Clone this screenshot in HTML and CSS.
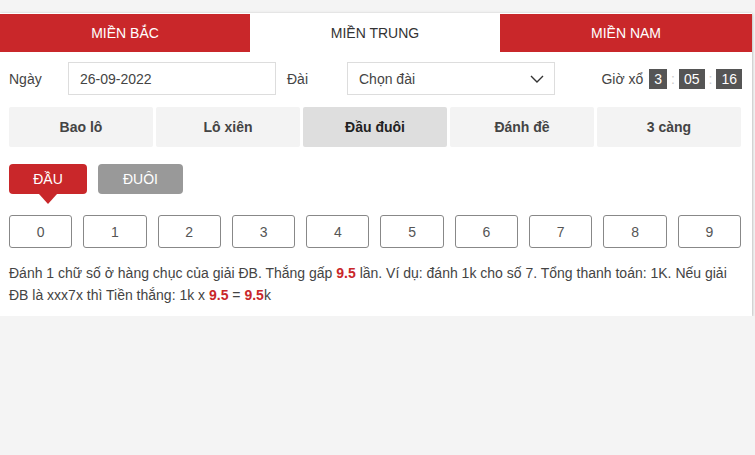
FILE: index.html
```html
<!DOCTYPE html>
<html lang="vi">
  <head>
    <meta charset="UTF-8" />
    <meta name="viewport" content="width=device-width, initial-scale=1" />
    <title>Đầu đuôi - Miền Trung</title>
    <link rel="stylesheet" href="styles.css">
  </head>
  <body>
    <div class="card">
      <div class="region-tabs">
        <div class="region red">MIỀN BẮC</div>
        <div class="region active">MIỀN TRUNG</div>
        <div class="region red wide">MIỀN NAM</div>
      </div>

      <div class="filter-row">
        <span class="label">Ngày</span>
        <div class="field">26-09-2022</div>
        <span class="label label-dai">Đài</span>
        <div class="field select">
          <span>Chọn đài</span>
          <svg width="14" height="8" viewBox="0 0 14 8">
            <path d="M1 1 L7 7 L13 1" fill="none" stroke="#333" stroke-width="1.4" />
          </svg>
        </div>
        <div class="timer">
          <span class="timer-label">Giờ xổ</span>
          <span class="tbox">3</span>
          <span class="colon">:</span>
          <span class="tbox">05</span>
          <span class="colon">:</span>
          <span class="tbox">16</span>
        </div>
      </div>

      <div class="game-tabs">
        <div class="game">Bao lô</div>
        <div class="game">Lô xiên</div>
        <div class="game active">Đầu đuôi</div>
        <div class="game">Đánh đề</div>
        <div class="game">3 càng</div>
      </div>

      <div class="mode-row">
        <button class="mode active">ĐẦU</button>
        <button class="mode">ĐUÔI</button>
      </div>

      <div class="numbers">
        <div class="num">0</div>
        <div class="num">1</div>
        <div class="num">2</div>
        <div class="num">3</div>
        <div class="num">4</div>
        <div class="num">5</div>
        <div class="num">6</div>
        <div class="num">7</div>
        <div class="num">8</div>
        <div class="num">9</div>
      </div>

      <p class="note">
        Đánh 1 chữ số ở hàng chục của giải ĐB. Thắng gấp <b>9.5</b> lần. Ví dụ: đánh 1k cho số 7. Tổng thanh toán: 1K. Nếu giải
        ĐB là xxx7x thì Tiền thắng: 1k x <b>9.5</b> = <b>9.5</b>k
      </p>
    </div>
  </body>
</html>
```

FILE: styles.css
```css
/* Reset and basic styles */
* {
  margin: 0;
  padding: 0;
  box-sizing: border-box;
}
body {
  font-family: "Liberation Sans", Arial, sans-serif;
  font-size: 14px;
  color: #333;
  background: #f4f4f4;
  padding-top: 13px;
}
.card {
  width: 752px;
  background: #fff;
  box-shadow: 0 1px 3px rgba(0, 0, 0, 0.35);
  padding-bottom: 10px;
}

/* Region tabs */
.region-tabs {
  display: flex;
  padding-top: 1px;
}
.region {
  width: 250px;
  height: 38px;
  display: flex;
  align-items: center;
  justify-content: center;
  font-size: 14px;
  color: #333;
}
.region.wide {
  width: 252px;
}
.region.red {
  background: #c9272a;
  color: #fff;
}

/* Date / station / timer */
.filter-row {
  display: flex;
  align-items: center;
  padding: 10px 9px 0;
}
.label {
  width: 59px;
  color: #444;
}
.label-dai {
  margin-left: 11px;
  width: 60px;
}
.field {
  width: 208px;
  height: 33px;
  border: 1px solid #ddd;
  padding: 0 11px;
  display: flex;
  align-items: center;
  color: #444;
}
.field.select {
  justify-content: space-between;
  padding-right: 10px;
}
.timer {
  margin-left: auto;
  display: flex;
  align-items: center;
  margin-right: 1px;
}
.timer-label {
  margin-right: 6px;
  color: #444;
}
.tbox {
  background: #555;
  color: #fff;
  height: 20px;
  line-height: 20px;
  padding: 0 5px;
  font-size: 14px;
}
.colon {
  color: #ccc;
  margin: 0 4px;
}

/* Game type tabs */
.game-tabs {
  display: flex;
  gap: 3px;
  padding: 0 9px;
  margin-top: 12px;
}
.game {
  width: 144px;
  height: 40px;
  background: #f3f3f3;
  border-radius: 2px;
  display: flex;
  align-items: center;
  justify-content: center;
  font-weight: bold;
  color: #444;
}
.game.active {
  background: #dedede;
  color: #222;
}

/* Head / tail switch */
.mode-row {
  display: flex;
  gap: 11px;
  padding: 0 9px;
  margin-top: 17px;
}
.mode {
  width: 85px;
  height: 30px;
  border: none;
  border-radius: 4px;
  background: #999;
  color: #fff;
  font-family: inherit;
  font-size: 14px;
  position: relative;
}
.mode.active {
  width: 78px;
  background: #c9272a;
}
.mode.active::after {
  content: "";
  position: absolute;
  left: 30px;
  top: 30px;
  border-left: 9px solid transparent;
  border-right: 9px solid transparent;
  border-top: 10px solid #c9272a;
}

/* Digit boxes */
.numbers {
  display: grid;
  grid-template-columns: repeat(10, 1fr);
  gap: 11px;
  padding: 0 11px 0 9px;
  margin-top: 21px;
}
.num {
  height: 33px;
  border: 1px solid #888;
  border-radius: 3px;
  display: flex;
  align-items: center;
  justify-content: center;
  color: #555;
}

.note {
  margin-top: 14px;
  padding: 0 9px;
  line-height: 22px;
  color: #444;
}
.note b {
  color: #c9272a;
}
```
